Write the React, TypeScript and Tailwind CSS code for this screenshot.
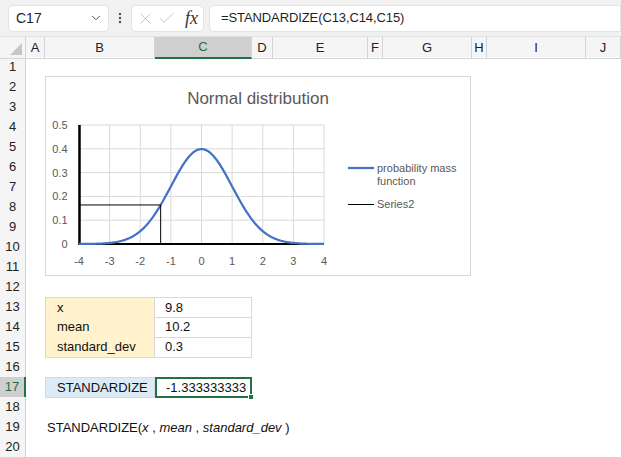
import React from 'react';
import { ChevronDown, X, Check, EllipsisVertical } from 'lucide-react';

// column layout: row header, A..I, J
const GRID = 'grid grid-cols-[26px_19px_110px_97px_21px_95px_15px_89px_15px_99px_1fr]';
const COLS = ['A', 'B', 'C', 'D', 'E', 'F', 'G', 'H', 'I', 'J'];

const pdf = (x: number) => Math.exp(-(x * x) / 2) / Math.sqrt(2 * Math.PI);

// chart coords (inside the chart border)
const X0 = 33;
const X1 = 278;
const YTOP = 48;
const Y0 = 167;
const sx = (v: number) => X0 + ((v + 4) / 8) * (X1 - X0);
const sy = (v: number) => Y0 - (v / 0.5) * (Y0 - YTOP);

const Chart: React.FC = () => {
  const pts: string[] = [];
  for (let i = 0; i <= 160; i++) {
    const x = -4 + i * 0.05;
    pts.push(`${i === 0 ? 'M' : 'L'}${sx(x).toFixed(2)},${sy(pdf(x)).toFixed(2)}`);
  }
  const z = -1.3333333;
  const zx = sx(z);
  const zy = sy(pdf(z));
  const xticks = [-4, -3, -2, -1, 0, 1, 2, 3, 4];
  const yticks = [0, 0.1, 0.2, 0.3, 0.4, 0.5];

  return (
    <div className="absolute left-[45px] top-[76px] w-[426px] h-[200px] border border-[#d9d9d9] bg-white">
      <svg width={424} height={198} className="block" style={{ fontFamily: '"Liberation Sans", Arial, sans-serif' }}>
        <text x={212} y={27} textAnchor="middle" fontSize={17} fill="#595959">
          Normal distribution
        </text>
        {yticks.map((t) => (
          <g key={t}>
            <line x1={X0} x2={X1} y1={sy(t)} y2={sy(t)} stroke="#d9d9d9" strokeWidth={1} />
            <text x={21.5} y={sy(t) + 4} textAnchor="end" fontSize={11} fill="#595959">
              {t === 0 ? '0' : t.toFixed(1)}
            </text>
          </g>
        ))}
        {xticks.map((t) => (
          <g key={t}>
            <line x1={sx(t)} x2={sx(t)} y1={YTOP} y2={Y0} stroke="#d9d9d9" strokeWidth={1} />
            <text x={sx(t)} y={188} textAnchor="middle" fontSize={11} fill="#595959">
              {t}
            </text>
          </g>
        ))}
        <line x1={X0} x2={X1} y1={Y0} y2={Y0} stroke="#000" strokeWidth={2} />
        <line x1={X0 + 0.5} x2={X0 + 0.5} y1={YTOP} y2={Y0 + 1} stroke="#000" strokeWidth={2.5} />
        <path d={pts.join(' ')} fill="none" stroke="#4472c4" strokeWidth={2.25} strokeLinejoin="round" />
        <polyline
          points={`${X0},${zy} ${zx},${zy} ${zx},${Y0}`}
          fill="none"
          stroke="#000"
          strokeWidth={1}
        />
        {/* legend */}
        <line x1={302} x2={328} y1={91} y2={91} stroke="#4472c4" strokeWidth={2.25} />
        <text x={331} y={95} fontSize={11} fill="#595959">probability mass</text>
        <text x={331} y={108} fontSize={11} fill="#595959">function</text>
        <line x1={302} x2={328} y1={127.5} y2={127.5} stroke="#000" strokeWidth={1} />
        <text x={331} y={131} fontSize={11} fill="#595959">Series2</text>
      </svg>
    </div>
  );
};

const FormulaBar: React.FC = () => (
  <div className="h-[37px] bg-[#f1f1f1] flex items-center pl-[8px] gap-0 border-b border-[#e1e1e1]">
    <div className="w-[101px] h-[27px] bg-white border border-[#e3e3e3] rounded-[5px] flex items-center justify-between pl-[7px] pr-[5px]">
      <span className="text-[14px] text-[#1f1f1f]">C17</span>
      <ChevronDown size={14} strokeWidth={1.6} className="text-[#444]" />
    </div>
    <div className="w-[22px] flex justify-center">
      <EllipsisVertical size={14} strokeWidth={2.2} className="text-[#555]" />
    </div>
    <div className="w-[73px] h-[27px] bg-white border border-[#e3e3e3] rounded-[5px] flex items-center pl-[4px] gap-[2px]">
      <X size={19} strokeWidth={1} className="text-[#b5b5b5]" />
      <Check size={19} strokeWidth={1} className="text-[#b5b5b5]" />
      <span
        className="ml-[7px] text-[18px] italic text-[#333]"
        style={{ fontFamily: '"Liberation Serif", "Times New Roman", serif' }}
      >
        fx
      </span>
    </div>
    <div className="ml-[5px] flex-1 h-[27px] bg-white border border-[#e3e3e3] rounded-l-[5px] flex items-center pl-[11px]">
      <span className="text-[13px] text-[#1f1f1f] tracking-[-0.1px]">=STANDARDIZE(C13,C14,C15)</span>
    </div>
  </div>
);

const HeaderRow: React.FC = () => (
  <div className={`${GRID} h-[20px] bg-[#f5f5f5]`}>
    <div className="relative border-r border-b border-[#d4d4d4]">
      <div className="absolute right-[3px] bottom-[3px] w-0 h-0 border-l-[12px] border-l-transparent border-b-[12px] border-b-[#c6c6c6]" />
    </div>
    {COLS.map((c) => (
      <div
        key={c}
        className={
          c === 'C'
            ? 'flex items-center justify-center text-[13px] text-[#1e6e43] bg-[#cfcfcf] border-r border-[#d4d4d4] border-b-2 border-b-[#217346]'
            : 'flex items-center justify-center text-[13px] text-[#222] border-r border-b border-[#d4d4d4]'
        }
      >
        {c}
      </div>
    ))}
  </div>
);

const cellText = 'text-[13px] text-[#111] leading-none flex items-center whitespace-nowrap';

const labels: Record<number, [string, string]> = {
  13: ['x', '9.8'],
  14: ['mean', '10.2'],
  15: ['standard_dev', '0.3'],
};

const Row: React.FC<{ n: number }> = ({ n }) => {
  const selected = n === 17;
  let b: React.ReactNode = null;
  let c: React.ReactNode = null;
  let bClass = '';
  let cClass = '';

  if (labels[n]) {
    const top = n === 13 ? 'border-t' : '';
    bClass = `bg-[#fff2cc] border-l border-r border-b border-[#d9d9d9] pl-[11px] ${top}`;
    cClass = `border-r border-b border-[#d9d9d9] pl-[10px] ${top}`;
    b = labels[n][0];
    c = labels[n][1];
  } else if (n === 17) {
    bClass = 'bg-[#ddebf7] border border-[#d9d9d9] pl-[11px]';
    cClass = 'relative border-2 border-[#217346] pl-[9px]';
    b = 'STANDARDIZE';
    c = (
      <>
        -1.333333333
        <span className="absolute right-[-4px] bottom-[-4px] w-[6px] h-[6px] bg-[#217346] border border-white" />
      </>
    );
  } else if (n === 19) {
    bClass = 'pl-[2px] overflow-visible';
    b = (
      <span>
        STANDARDIZE(<i>x</i> , <i>mean</i> , <i>standard_dev</i> )
      </span>
    );
  }

  return (
    <div className={`${GRID} h-[20px]`}>
      <div
        className={
          selected
            ? 'flex items-center justify-center text-[13px] text-[#1e6e43] bg-[#cfcfcf] border-b border-[#d4d4d4] border-r-2 border-r-[#217346]'
            : 'flex items-center justify-center text-[13px] text-[#222] bg-[#f5f5f5] border-r border-b border-[#d4d4d4]'
        }
      >
        {n}
      </div>
      <div />
      <div className={`${cellText} ${bClass}`}>{b}</div>
      <div className={`${cellText} ${cClass}`}>{c}</div>
      <div />
      <div />
      <div />
      <div />
      <div />
      <div />
      <div />
    </div>
  );
};

export default function App() {
  const rows = Array.from({ length: 20 }, (_, i) => i + 1);
  return (
    <div
      className="w-[621px] h-[457px] overflow-hidden bg-white relative"
      style={{ fontFamily: '"Liberation Sans", Arial, sans-serif' }}
    >
      <FormulaBar />
      <HeaderRow />
      <div>
        {rows.map((n) => (
          <Row key={n} n={n} />
        ))}
      </div>
      <Chart />
    </div>
  );
}
